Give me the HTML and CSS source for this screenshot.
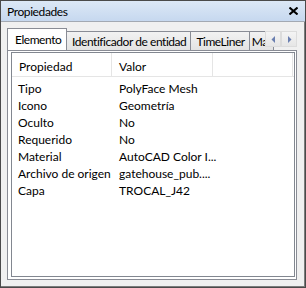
FILE: index.html
```html
<!DOCTYPE html>
<html lang="es">

<head>
    <meta charset="UTF-8">
    <meta name="viewport" content="width=device-width, initial-scale=1.0">
    <title>Propiedades</title>
    <link rel="stylesheet" href="styles.css">
</head>

<body>
    <div class="window">
        <div class="titlebar">
            <span class="title">Propiedades</span>
            <svg class="close" width="9" height="8" viewBox="0 0 9 8">
                <path d="M0.5 0.5 L8.5 7.5 M8.5 0.5 L0.5 7.5" stroke="#000" stroke-width="2" fill="none" />
            </svg>
        </div>

        <div class="content">
            <div class="tabs">
                <div class="tab active">Elemento</div>
                <div class="tab">Identificador de entidad</div>
                <div class="tab">TimeLiner</div>
                <div class="tab last">Ma</div>
                <div class="scroller">
                    <div class="arrow">
                        <svg width="5" height="7" viewBox="0 0 5 7"><path d="M4 0 L4 7 L0.5 3.5 Z" fill="#6a7fb0" /></svg>
                    </div>
                    <div class="arrow">
                        <svg width="5" height="7" viewBox="0 0 5 7"><path d="M1 0 L1 7 L4.5 3.5 Z" fill="#6a7fb0" /></svg>
                    </div>
                </div>
            </div>

            <div class="pane">
                <div class="list">
                    <div class="header">
                        <div class="col name">Propiedad</div>
                        <div class="col value">Valor</div>
                        <div class="col rest"></div>
                    </div>
                    <div class="rows">
                        <div class="row"><span class="name">Tipo</span><span class="value">PolyFace Mesh</span></div>
                        <div class="row"><span class="name">Icono</span><span class="value">Geometría</span></div>
                        <div class="row"><span class="name">Oculto</span><span class="value">No</span></div>
                        <div class="row"><span class="name">Requerido</span><span class="value">No</span></div>
                        <div class="row"><span class="name">Material</span><span class="value">AutoCAD Color I...</span></div>
                        <div class="row"><span class="name">Archivo de origen</span><span class="value">gatehouse_pub....</span></div>
                        <div class="row"><span class="name">Capa</span><span class="value">TROCAL_J42</span></div>
                    </div>
                </div>
            </div>
        </div>
    </div>
</body>

</html>
```

FILE: styles.css
```css
html,
body {
    margin: 0;
    padding: 0;
}

body {
    width: 306px;
    height: 288px;
    font-family: Lato, "Liberation Sans", sans-serif;
    font-size: 12px;
    color: #000;
}

.window {
    box-sizing: border-box;
    width: 306px;
    height: 288px;
    border: 1px solid #4a4a4a;
    box-shadow: inset -1px -1px 0 #7c7c7c;
    background: #f0f0f0;
    display: flex;
    flex-direction: column;
}

.titlebar {
    height: 20px;
    flex: 0 0 auto;
    display: flex;
    align-items: center;
    justify-content: space-between;
    padding: 0 7px 0 6px;
    background: linear-gradient(#dce8f6, #c6d8ef);
    border-bottom: 1px solid #a3a9b2;
}

.title {
    font-size: 12px;
    letter-spacing: -0.4px;
}

.close {
    display: block;
}

.content {
    flex: 1;
    display: flex;
    flex-direction: column;
    padding: 6px 8px 7px 6px;
}

.tabs {
    display: flex;
    align-items: flex-end;
    height: 22px;
    position: relative;
    overflow: hidden;
}

.tab {
    box-sizing: border-box;
    height: 19px;
    padding: 0 4px 0 5px;
    line-height: 19px;
    white-space: nowrap;
    letter-spacing: -0.45px;
    border: 1px solid #898c95;
    border-bottom: none;
    border-left: none;
    background: linear-gradient(#f2f2f2, #e3e3e3);
}

.tab.active {
    width: 60px;
    height: 23px;
    margin-bottom: -1px;
    padding: 0 0 0 7px;
    line-height: 22px;
    background: #fff;
    border-left: 1px solid #898c95;
    position: relative;
    z-index: 1;
}

.tab.last {
    width: 24px;
    padding-left: 2px;
}

.scroller {
    position: absolute;
    right: 0;
    bottom: 3px;
    display: flex;
    background: #f0f0f0;
}

.arrow {
    box-sizing: border-box;
    width: 16px;
    height: 16px;
    border: 1px solid #dcdcdc;
    background: linear-gradient(#f4f4f4, #e6e6e6);
    display: flex;
    align-items: center;
    justify-content: center;
}

.pane {
    flex: 1;
    display: flex;
    background: #fff;
    border: 1px solid #898c95;
    padding: 1px 1px 2px 3px;
}

.list {
    flex: 1;
    border: 1px solid #828790;
    background: #fff;
    display: flex;
    flex-direction: column;
}

.header {
    display: flex;
    height: 23px;
    border-bottom: 1px solid #e5e5e5;
}

.header .col {
    line-height: 23px;
    padding: 2px 0 0 7px;
    box-sizing: border-box;
    border-right: 1px solid #e5e5e5;
}

.header .name {
    width: 100px;
}

.header .value {
    width: 101px;
}

.header .rest {
    width: 80px;
}

.rows {
    padding-top: 3px;
}

.row {
    display: flex;
    height: 17px;
    line-height: 17px;
    white-space: nowrap;
}

.row .name {
    width: 101px;
    padding-left: 6px;
}
```
